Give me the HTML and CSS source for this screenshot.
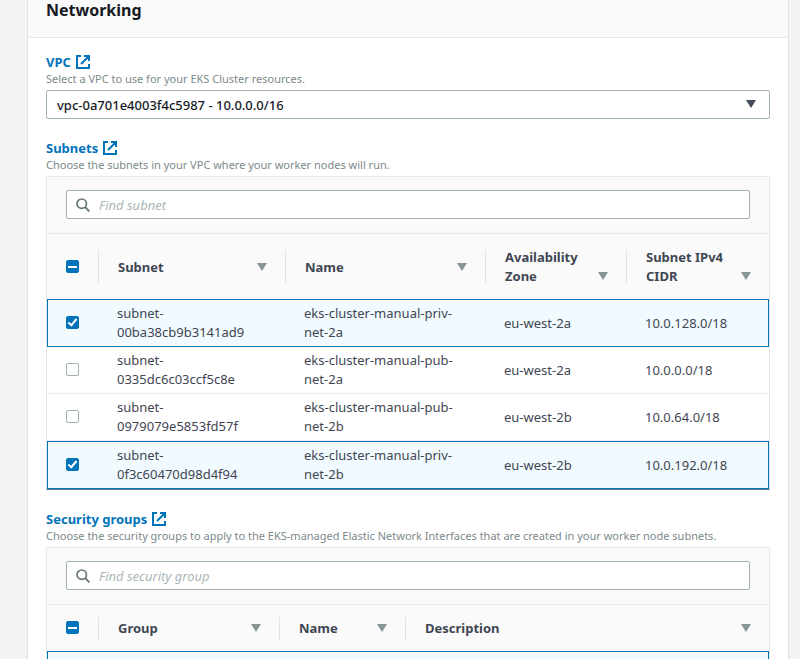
FILE: index.html
```html
<!DOCTYPE html>
<html lang="en">
  <head>
    <meta charset="UTF-8" />
    <meta name="viewport" content="width=device-width, initial-scale=1.0" />
    <title>Networking</title>
    <link rel="stylesheet" href="styles.css">
  </head>
  <body>
    <!-- Shared icons -->
    <svg class="sprite" aria-hidden="true">
      <symbol id="external" viewBox="0 0 14 14">
        <path d="M5 1H1v12h12V9M8 1h5v5M13 1L5 9" fill="none" stroke="currentColor" stroke-width="2" />
      </symbol>
      <symbol id="search" viewBox="0 0 14 14">
        <circle cx="5.7" cy="5.7" r="4.7" fill="none" stroke="currentColor" stroke-width="1.7" />
        <path d="M9 9l4.4 4.4" fill="none" stroke="currentColor" stroke-width="1.8" />
      </symbol>
      <symbol id="caret" viewBox="0 0 10 8">
        <path d="M0 0h10L5 8z" fill="currentColor" />
      </symbol>
    </svg>

    <main class="panel">
      <div class="panel-header">
        <h2>Networking</h2>
      </div>

      <div class="panel-body">
        <!-- VPC -->
        <section class="field">
          <a class="field-link" href="#" id="vpc-label">VPC <svg class="icon"><use href="#external" /></svg></a>
          <p class="hint">Select a VPC to use for your EKS Cluster resources.</p>
          <div class="select-box">
            <select aria-labelledby="vpc-label">
              <option>vpc-0a701e4003f4c5987 - 10.0.0.0/16</option>
            </select>
            <svg class="caret"><use href="#caret" /></svg>
          </div>
        </section>

        <!-- Subnets -->
        <section class="field">
          <a class="field-link" href="#">Subnets <svg class="icon"><use href="#external" /></svg></a>
          <p class="hint">Choose the subnets in your VPC where your worker nodes will run.</p>
          <div class="table-box">
            <div class="toolbar">
              <label class="search-box">
                <svg class="icon"><use href="#search" /></svg>
                <input type="search" placeholder="Find subnet" aria-label="Find subnet" />
              </label>
            </div>
            <table>
              <colgroup>
                <col class="col-check" />
                <col class="col-subnet" />
                <col class="col-subnet-name" />
                <col class="col-zone" />
                <col />
              </colgroup>
              <thead>
                <tr>
                  <th><input type="checkbox" class="select-all" aria-label="Select all subnets" /></th>
                  <th><div class="head"><span>Subnet</span><svg class="caret"><use href="#caret" /></svg></div></th>
                  <th><div class="head"><span>Name</span><svg class="caret"><use href="#caret" /></svg></div></th>
                  <th><div class="head"><span>Availability Zone</span><svg class="caret"><use href="#caret" /></svg></div></th>
                  <th><div class="head"><span>Subnet IPv4 CIDR</span><svg class="caret"><use href="#caret" /></svg></div></th>
                </tr>
              </thead>
              <tbody>
                <tr class="selected">
                  <td><input type="checkbox" aria-labelledby="subnet-1" checked /></td>
                  <td id="subnet-1">subnet-<br />00ba38cb9b3141ad9</td>
                  <td>eks-cluster-manual-priv-<br />net-2a</td>
                  <td>eu-west-2a</td>
                  <td>10.0.128.0/18</td>
                </tr>
                <tr>
                  <td><input type="checkbox" aria-labelledby="subnet-2" /></td>
                  <td id="subnet-2">subnet-<br />0335dc6c03ccf5c8e</td>
                  <td>eks-cluster-manual-pub-<br />net-2a</td>
                  <td>eu-west-2a</td>
                  <td>10.0.0.0/18</td>
                </tr>
                <tr>
                  <td><input type="checkbox" aria-labelledby="subnet-3" /></td>
                  <td id="subnet-3">subnet-<br />0979079e5853fd57f</td>
                  <td>eks-cluster-manual-pub-<br />net-2b</td>
                  <td>eu-west-2b</td>
                  <td>10.0.64.0/18</td>
                </tr>
                <tr class="selected">
                  <td><input type="checkbox" aria-labelledby="subnet-4" checked /></td>
                  <td id="subnet-4">subnet-<br />0f3c60470d98d4f94</td>
                  <td>eks-cluster-manual-priv-<br />net-2b</td>
                  <td>eu-west-2b</td>
                  <td>10.0.192.0/18</td>
                </tr>
              </tbody>
            </table>
          </div>
        </section>

        <!-- Security groups -->
        <section class="field">
          <a class="field-link" href="#">Security groups <svg class="icon"><use href="#external" /></svg></a>
          <p class="hint">Choose the security groups to apply to the EKS-managed Elastic Network Interfaces that are created in your worker node subnets.</p>
          <div class="table-box">
            <div class="toolbar">
              <label class="search-box">
                <svg class="icon"><use href="#search" /></svg>
                <input type="search" placeholder="Find security group" aria-label="Find security group" />
              </label>
            </div>
            <table>
              <colgroup>
                <col class="col-check" />
                <col class="col-group" />
                <col class="col-group-name" />
                <col />
              </colgroup>
              <thead>
                <tr>
                  <th><input type="checkbox" class="select-all" aria-label="Select all security groups" /></th>
                  <th><div class="head"><span>Group</span><svg class="caret"><use href="#caret" /></svg></div></th>
                  <th><div class="head"><span>Name</span><svg class="caret"><use href="#caret" /></svg></div></th>
                  <th><div class="head"><span>Description</span><svg class="caret"><use href="#caret" /></svg></div></th>
                </tr>
              </thead>
              <tbody>
                <tr class="selected">
                  <td></td>
                  <td></td>
                  <td></td>
                  <td></td>
                </tr>
              </tbody>
            </table>
          </div>
        </section>
      </div>
    </main>

    <script>
      // Only some rows are selected, so the header boxes show a dash
      document.querySelectorAll(".select-all").forEach((box) => {
        box.indeterminate = true;
      });
    </script>
  </body>
</html>
```

FILE: styles.css
```css
*,
*::before,
*::after {
  box-sizing: border-box;
}

body {
  height: 100vh;
  margin: 0;
  padding: 0 11px 0 27px;
  overflow: hidden;
  background-color: #f2f3f3;
  color: #3f4653;
  font-family: "Noto Sans", sans-serif;
  font-size: 13px;
  line-height: 19px;
}

.sprite {
  display: none;
}

.icon {
  width: 14px;
  height: 14px;
  flex: none;
}

.caret {
  width: 10px;
  height: 8px;
  flex: none;
}

/* Panel */
.panel {
  min-height: 100vh;
  background-color: white;
  border: 1px solid #e1e4e4;
  border-width: 0 1px;
}

.panel-header {
  padding: 0 18px 17px;
  background-color: #fafafa;
  border-bottom: 1px solid #e6e9e9;
}

.panel-header h2 {
  margin: 0;
  color: #16191f;
  font-size: 16px;
  line-height: 20px;
}

.panel-body {
  padding: 14px 18px 20px;
}

/* Fields */
.field {
  margin-bottom: 19px;
}

.field-link {
  display: flex;
  align-items: center;
  gap: 5px;
  width: fit-content;
  color: #0073bb;
  font-weight: bold;
  line-height: 20px;
  text-decoration: none;
}

.hint {
  margin: 0 0 4px;
  color: #7c8a8b;
  font-size: 11px;
  line-height: 14px;
}

.select-box {
  position: relative;
}

.select-box select {
  display: block;
  width: 100%;
  height: 29px;
  padding: 0 40px 0 10px;
  appearance: none;
  background-color: white;
  border: 1px solid #a0b1b1;
  border-radius: 2px;
  color: #16191f;
  font: 500 13px "Noto Sans", sans-serif;
}

.select-box .caret {
  position: absolute;
  top: 10px;
  right: 14px;
  color: #444b59;
  pointer-events: none;
}

/* Tables */
.table-box {
  border: 1px solid #e6e9e9;
  border-bottom: 1px solid #6f767c;
}

.toolbar {
  padding: 13px 19px 14px;
  background-color: #fafafa;
  border-bottom: 1px solid #e6e9e9;
}

.search-box {
  display: flex;
  align-items: center;
  gap: 9px;
  height: 29px;
  padding: 0 9px;
  background-color: white;
  border: 1px solid #a0b1b1;
  border-radius: 2px;
  color: #687878;
}

.search-box input {
  flex: 1;
  min-width: 0;
  padding: 0;
  border: none;
  outline: none;
  background: none;
  color: #16191f;
  font: 13px "Noto Sans", sans-serif;
}

.search-box input::placeholder {
  color: #aab7b8;
  font-style: italic;
}

table {
  width: 100%;
  table-layout: fixed;
  border-spacing: 0;
}

.col-check {
  width: 51px;
}

.col-subnet {
  width: 187px;
}

.col-subnet-name {
  width: 200px;
}

.col-zone {
  width: 141px;
}

.col-group {
  width: 181px;
}

.col-group-name {
  width: 126px;
}

th {
  position: relative;
  padding: 14px 18px 13px 20px;
  background-color: #fafafa;
  text-align: left;
}

/* Short divider between the column heads */
th + th::before {
  content: "";
  position: absolute;
  top: 25%;
  bottom: 25%;
  left: 0;
  border-left: 1px solid #e1e4e4;
}

.head {
  display: flex;
  align-items: flex-end;
  justify-content: space-between;
}

.head .caret {
  margin-bottom: 6px;
  color: #879596;
}

td {
  height: 47px;
  padding: 4px 0 4px 19px;
  border-bottom: 1px solid #eaeded;
}

th:first-child,
td:first-child {
  padding-left: 19px;
  padding-right: 0;
}

.selected td {
  height: 48px;
  background-color: #f1faff;
  border-top: 1px solid #0073bb;
  border-bottom-color: #0073bb;
}

.selected td:first-child {
  border-left: 1px solid #0073bb;
  padding-left: 18px;
}

.selected td:last-child {
  border-right: 1px solid #0073bb;
}

/* Checkboxes */
input[type="checkbox"] {
  position: relative;
  display: block;
  width: 13px;
  height: 13px;
  margin: 0 0 2px;
  appearance: none;
  background-color: white;
  border: 1px solid #a0b1b1;
  border-radius: 2px;
}

input[type="checkbox"]:checked,
input[type="checkbox"]:indeterminate {
  background-color: #0073bb;
  border-color: #0073bb;
}

input[type="checkbox"]:checked::after {
  content: "";
  position: absolute;
  top: 0;
  left: 3px;
  width: 5px;
  height: 9px;
  border: solid white;
  border-width: 0 2px 2px 0;
  transform: rotate(40deg);
}

input[type="checkbox"]:indeterminate::after {
  content: "";
  position: absolute;
  top: 5px;
  left: 1px;
  width: 9px;
  height: 2px;
  background-color: white;
}
```
